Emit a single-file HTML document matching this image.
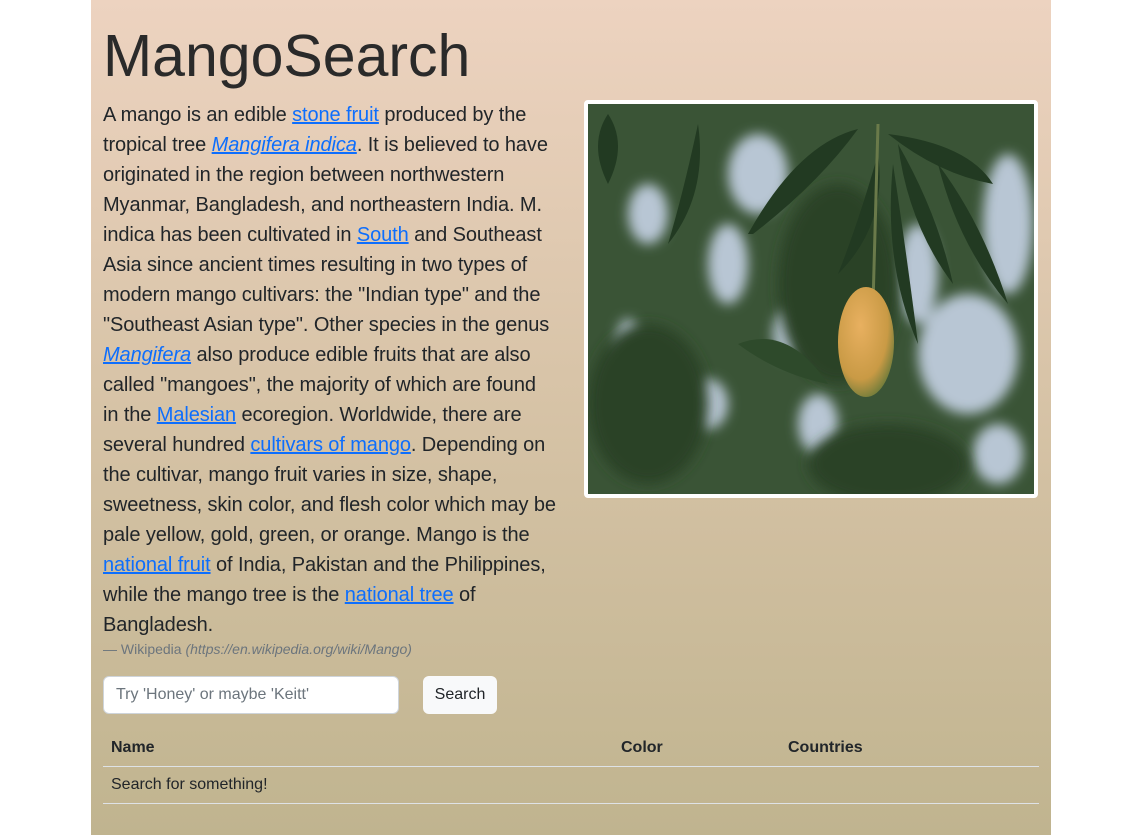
<!DOCTYPE html>
<html><head><meta charset="utf-8"><style>
html,body{margin:0;padding:0;background:#fff;}
body{width:1142px;height:835px;overflow:hidden;font-family:"Liberation Sans",sans-serif;}
.c{position:absolute;left:91px;top:0;width:960px;height:835px;background:linear-gradient(#edd3c0 0%,#d8c4a8 45%,#c0b48f 100%);color:#212529;}
h1{position:absolute;left:12px;top:22px;margin:0;font-weight:normal;font-size:59px;color:#2a2a2a;}
.p{position:absolute;left:12px;top:100px;font-size:20px;line-height:30px;white-space:nowrap;letter-spacing:-0.1px;}
a{color:#0d6efd;text-decoration:underline;}
.src{position:absolute;left:12px;top:641px;font-size:14px;color:#6c757d;}
.img{position:absolute;left:493px;top:100px;width:446px;height:390px;border:4px solid #fff;border-radius:4px;background:#dfe6ee;overflow:hidden;}
.inp{position:absolute;left:12px;top:676px;border:1px solid #ced4da;border-radius:6px;background:#fff;font-size:16px;color:#6c757d;line-height:36px;padding-left:12px;box-sizing:border-box;width:296px;height:38px;}
.btn{position:absolute;left:332px;top:676px;width:74px;height:38px;border-radius:6px;background:#f8f9fa;font-size:16px;line-height:38px;text-align:center;}
.th{position:absolute;top:739px;font-weight:bold;font-size:16px;}
.ln{position:absolute;left:12px;width:936px;height:1px;background:#dee2e6;}
</style></head><body><div class="c">
<h1>MangoSearch</h1>
<div class="p">A mango is an edible <a>stone fruit</a> produced by the<br>tropical tree <a><i>Mangifera indica</i></a>. It is believed to have<br>originated in the region between northwestern<br>Myanmar, Bangladesh, and northeastern India. M.<br>indica has been cultivated in <a>South</a> and Southeast<br>Asia since ancient times resulting in two types of<br>modern mango cultivars: the "Indian type" and the<br>"Southeast Asian type". Other species in the genus<br><a><i>Mangifera</i></a> also produce edible fruits that are also<br>called "mangoes", the majority of which are found<br>in the <a>Malesian</a> ecoregion. Worldwide, there are<br>several hundred <a>cultivars of mango</a>. Depending on<br>the cultivar, mango fruit varies in size, shape,<br>sweetness, skin color, and flesh color which may be<br>pale yellow, gold, green, or orange. Mango is the<br><a>national fruit</a> of India, Pakistan and the Philippines,<br>while the mango tree is the <a>national tree</a> of<br>Bangladesh.</div>
<div class="src">— Wikipedia <i>(https://en.wikipedia.org/wiki/Mango)</i></div>
<div class="img"><svg width="446" height="390" viewBox="0 0 446 390">
<defs><filter id="b"><feGaussianBlur stdDeviation="6"/></filter><radialGradient id="m" cx="0.4" cy="0.35" r="0.7"><stop offset="0" stop-color="#e8b060"/><stop offset="0.7" stop-color="#c99a45"/><stop offset="1" stop-color="#6b7a3a"/></radialGradient></defs>
<rect width="446" height="390" fill="#3a5436"/>
<g filter="url(#b)" fill="#b8c6d4">
<ellipse cx="170" cy="70" rx="30" ry="40"/>
<ellipse cx="140" cy="160" rx="20" ry="40"/>
<ellipse cx="60" cy="110" rx="20" ry="30"/>
<ellipse cx="420" cy="120" rx="25" ry="70"/>
<ellipse cx="380" cy="250" rx="50" ry="60"/>
<ellipse cx="330" cy="170" rx="20" ry="50"/>
<ellipse cx="230" cy="320" rx="20" ry="30"/>
<ellipse cx="120" cy="300" rx="20" ry="25"/>
<ellipse cx="410" cy="350" rx="25" ry="30"/>
<ellipse cx="40" cy="240" rx="12" ry="25"/>
<ellipse cx="200" cy="230" rx="15" ry="25"/>
</g>
<g filter="url(#b)" fill="#2a4227">
<ellipse cx="60" cy="300" rx="60" ry="80"/>
<ellipse cx="250" cy="180" rx="60" ry="100"/>
<ellipse cx="300" cy="360" rx="80" ry="40"/>
</g>
<g fill="#223a22">
<path d="M160 130 Q210 40 270 25 Q230 80 165 130Z"/>
<path d="M300 30 Q380 40 405 80 Q350 70 300 30Z"/>
<path d="M310 40 Q350 110 365 180 Q320 120 310 40Z"/>
<path d="M305 60 Q320 160 330 240 Q295 160 305 60Z"/>
<path d="M290 50 Q270 120 250 170 Q300 120 290 50Z"/>
<path d="M110 20 Q95 90 80 140 Q120 90 110 20Z"/>
<path d="M350 60 Q395 120 420 200 Q370 140 350 60Z"/>
<path d="M20 10 Q40 40 20 80 Q0 40 20 10Z"/>
<path d="M150 240 Q200 220 240 280 Q190 270 150 240Z" fill="#2e4a2b"/>
</g>
<path d="M290 20 L285 200" stroke="#6a7a4a" stroke-width="3"/>
<ellipse cx="278" cy="238" rx="28" ry="55" fill="url(#m)"/>
</svg></div>
<div class="inp">Try 'Honey' or maybe 'Keitt'</div>
<div class="btn">Search</div>
<div class="th" style="left:20px">Name</div>
<div class="th" style="left:530px">Color</div>
<div class="th" style="left:697px">Countries</div>
<div class="ln" style="top:766px"></div>
<div style="position:absolute;left:20px;top:776px;font-size:16px">Search for something!</div>
<div class="ln" style="top:803px"></div>
</div></body></html>
